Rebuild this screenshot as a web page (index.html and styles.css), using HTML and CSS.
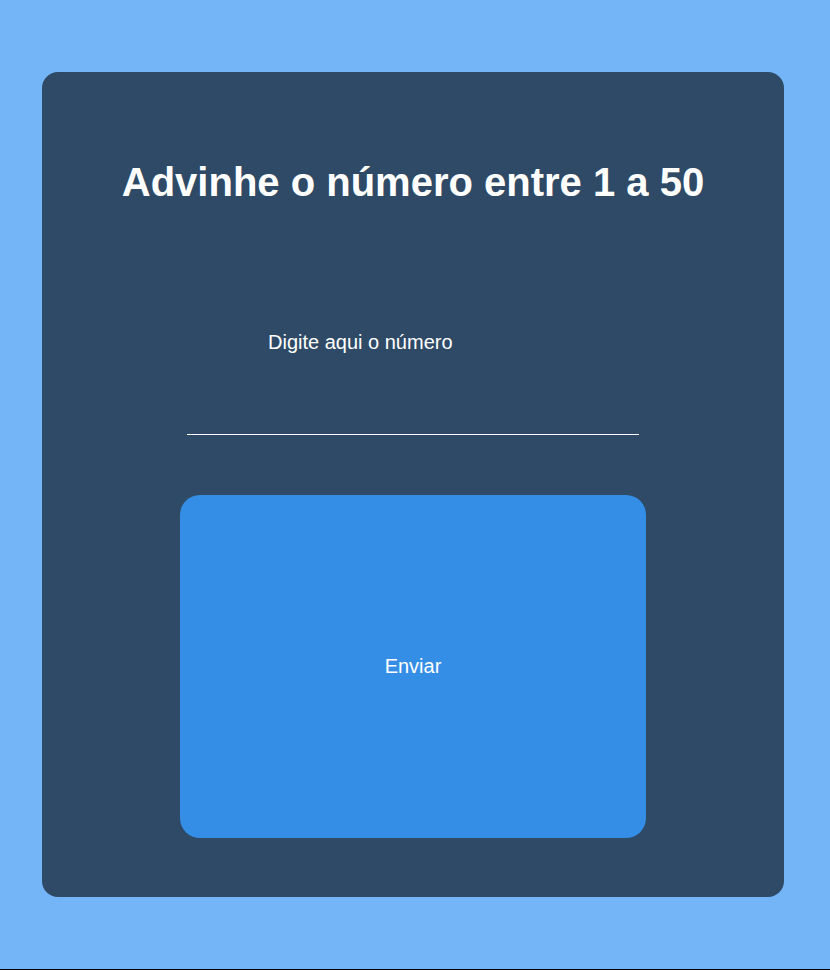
FILE: index.html
```html
<!DOCTYPE html>
<html lang="pt">
<head>
<meta charset="utf-8">
<title>Advinhe o número</title>
<link rel="stylesheet" href="styles.css">
</head>
<body>
<main class="card">
  <h1 class="title">Advinhe o número entre 1 a 50</h1>
  <form class="form">
    <label class="label" for="num">Digite aqui o número</label>
    <input class="input" id="num" type="text">
    <button class="button" type="button">Enviar</button>
  </form>
</main>
</body>
</html>
```
FILE: styles.css
```css
html {
  background: #000;
}
body {
  margin: 0;
  min-height: calc(100vh - 1px);
  background: #74b5f7;
  font-family: "Liberation Sans", Arial, sans-serif;
  color: #fff;
  display: flex;
  flex-direction: column;
  padding: 72px 46px 72px 42px;
  box-sizing: border-box;
}
.card {
  background: #2e4a66;
  border-radius: 16px;
  height: 825px;
  display: flex;
  flex-direction: column;
  align-items: center;
}
.title {
  margin: 88px 0 0;
  font-size: 40px;
  font-weight: bold;
  text-align: center;
}
.form {
  display: flex;
  flex-direction: column;
  align-items: center;
  width: 100%;
}
.label {
  align-self: flex-start;
  margin: 126px 0 0 226px;
  font-size: 20px;
}
.input {
  margin-top: 58px;
  width: 452px;
  height: 22px;
  background: transparent;
  border: none;
  border-bottom: 1px solid #fff;
  outline: none;
  color: #fff;
  padding: 0;
  font-size: 18px;
}
.button {
  margin-top: 60px;
  width: 466px;
  height: 343px;
  border: none;
  border-radius: 20px;
  background: #358ee6;
  color: #fff;
  font-family: "Liberation Sans", Arial, sans-serif;
  font-size: 20px;
}
```
